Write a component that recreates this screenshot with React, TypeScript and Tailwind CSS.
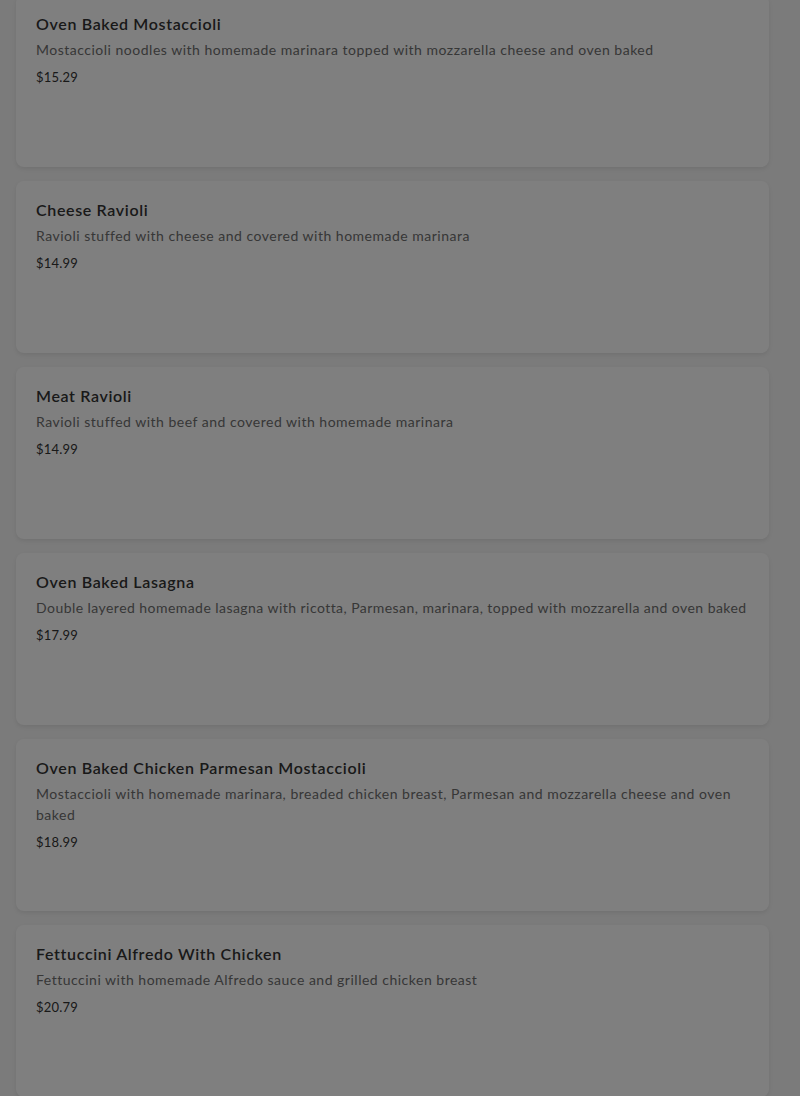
const items = [
  {
    name: "Oven Baked Mostaccioli",
    desc: "Mostaccioli noodles with homemade marinara topped with mozzarella cheese and oven baked",
    price: "$15.29",
  },
  {
    name: "Cheese Ravioli",
    desc: "Ravioli stuffed with cheese and covered with homemade marinara",
    price: "$14.99",
  },
  {
    name: "Meat Ravioli",
    desc: "Ravioli stuffed with beef and covered with homemade marinara",
    price: "$14.99",
  },
  {
    name: "Oven Baked Lasagna",
    desc: "Double layered homemade lasagna with ricotta, Parmesan, marinara, topped with mozzarella and oven baked",
    price: "$17.99",
    tight: true,
  },
  {
    name: "Oven Baked Chicken Parmesan Mostaccioli",
    desc: "Mostaccioli with homemade marinara, breaded chicken breast, Parmesan and mozzarella cheese and oven baked",
    price: "$18.99",
  },
  {
    name: "Fettuccini Alfredo With Chicken",
    desc: "Fettuccini with homemade Alfredo sauce and grilled chicken breast",
    price: "$20.79",
  },
];

const App = () => {
  return (
    <div className="min-h-screen bg-[#f6f6f6] font-['Lato',sans-serif] overflow-hidden h-[1096px]">
      <div className="flex flex-col gap-[14px] pl-4 pr-[31px] -mt-[5px]">
        {items.map((item) => (
          <div
            key={item.name}
            className="h-[172px] shrink-0 bg-white rounded-lg shadow-[0_2px_4px_rgba(0,0,0,0.08)] px-5 pt-[18px]"
          >
            <h3 className="text-[16px] leading-[22px] font-semibold text-[#333] tracking-[0.65px]">
              {item.name}
            </h3>
            <p
              className={
                item.tight
                  ? "mt-1 text-[14px] leading-[21px] text-[#6e6e6e] tracking-[0.45px] whitespace-nowrap"
                  : "mt-1 text-[14px] leading-[21px] text-[#6e6e6e] tracking-[0.5px]"
              }
            >
              {item.desc}
            </p>
            <p className="mt-[7px] text-[13px] leading-[20px] text-[#333] tracking-[0.2px]">{item.price}</p>
          </div>
        ))}
      </div>

      {/* dim overlay */}
      <div className="fixed inset-0 bg-black/50"></div>
    </div>
  );
};

export default App;
